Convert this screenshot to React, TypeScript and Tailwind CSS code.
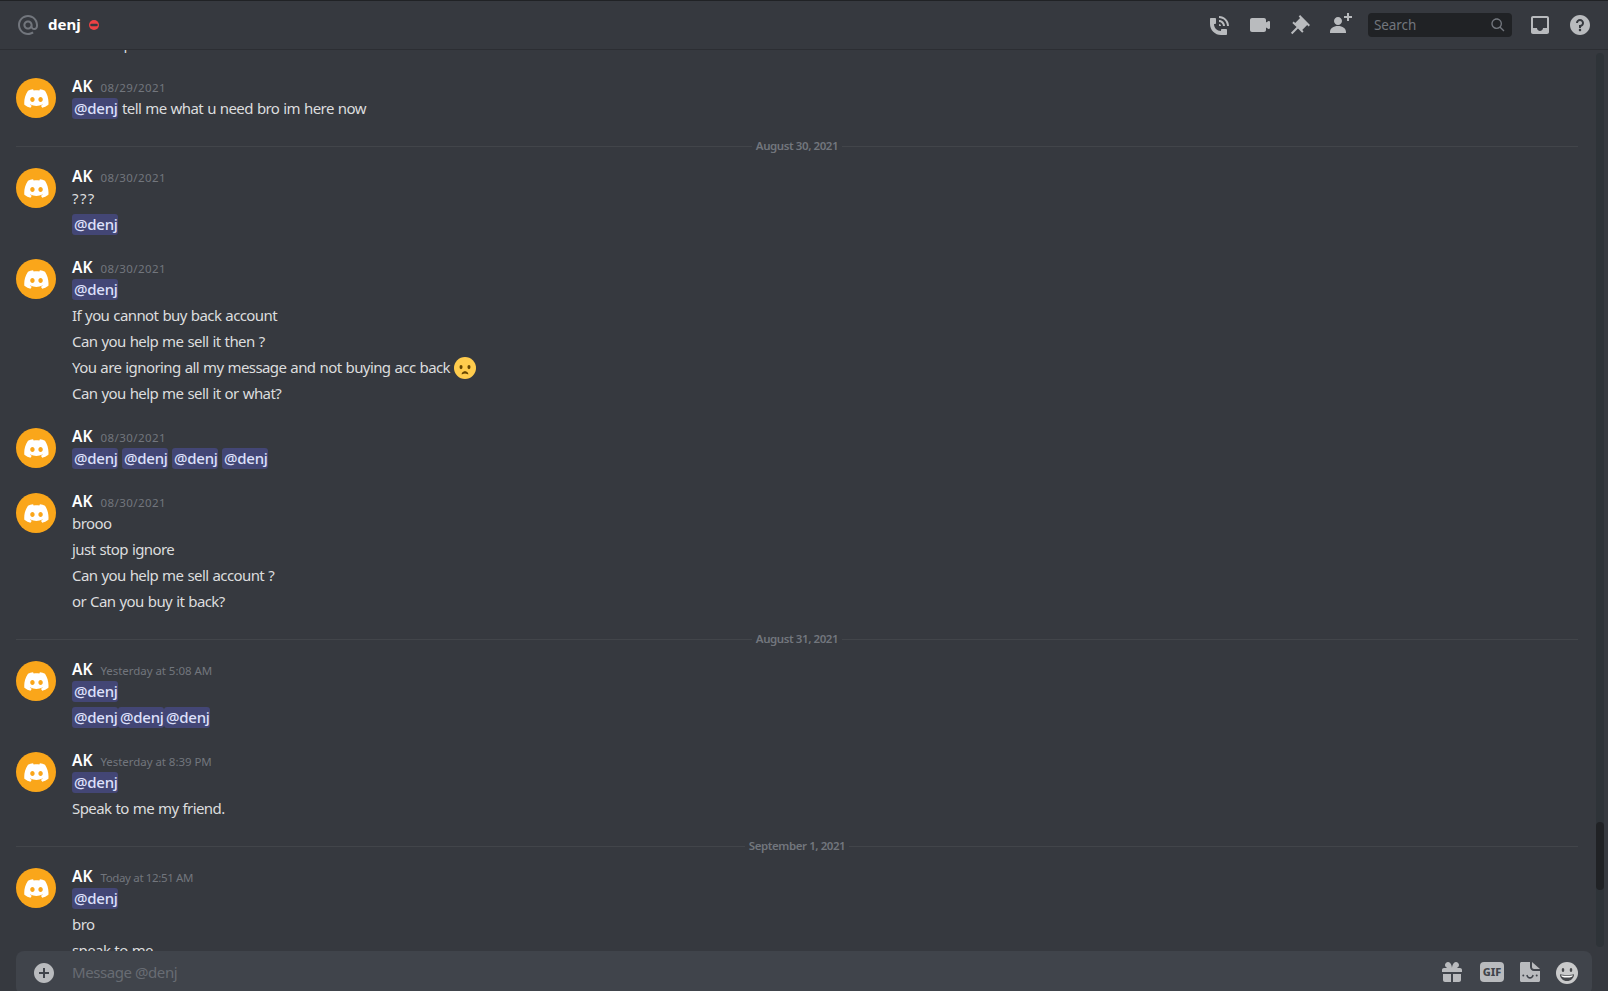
import type { ReactNode } from "react";

type MessageGroup = {
  time: string;
  lines: string[];
};

type Day = {
  label?: string;
  groups: MessageGroup[];
};

// "@denj" inside a line becomes a mention pill, ":frown:" becomes the emoji
const days: Day[] = [
  {
    groups: [{ time: "08/29/2021", lines: ["@denj tell me what u need bro im here now"] }],
  },
  {
    label: "August 30, 2021",
    groups: [
      { time: "08/30/2021", lines: ["???", "@denj"] },
      {
        time: "08/30/2021",
        lines: [
          "@denj",
          "If you cannot buy back account",
          "Can you help me sell it then ?",
          "You are ignoring all my message and not buying acc back :frown:",
          "Can you help me sell it or what?",
        ],
      },
      { time: "08/30/2021", lines: ["@denj @denj @denj @denj"] },
      {
        time: "08/30/2021",
        lines: ["brooo", "just stop ignore", "Can you help me sell account ?", "or Can you buy it back?"],
      },
    ],
  },
  {
    label: "August 31, 2021",
    groups: [
      { time: "Yesterday at 5:08 AM", lines: ["@denj", "@denj@denj@denj"] },
      { time: "Yesterday at 8:39 PM", lines: ["@denj", "Speak to me my friend."] },
    ],
  },
  {
    label: "September 1, 2021",
    groups: [{ time: "Today at 12:51 AM", lines: ["@denj", "bro", "speak to me"] }],
  },
];

function Icon({ size = 24, className, children }: { size?: number; className?: string; children: ReactNode }) {
  return (
    <svg width={size} height={size} viewBox="0 0 24 24" fill="currentColor" className={`shrink-0 ${className ?? ""}`}>
      {children}
    </svg>
  );
}

function Avatar() {
  return (
    <div className="mt-0.5 flex h-10 w-10 shrink-0 items-center justify-center rounded-full bg-[#faa61a]">
      <svg width="25" height="19" viewBox="0 0 71 55" fill="white">
        <path d="M60.1045 4.8978C55.5792 2.8214 50.7265 1.2916 45.6527 0.41542C45.5603 0.39851 45.468 0.440769 45.4204 0.525289C44.7963 1.6353 44.105 3.0834 43.6209 4.2216C38.1637 3.4046 32.7345 3.4046 27.3892 4.2216C26.905 3.0581 26.1886 1.6353 25.5617 0.525289C25.5141 0.443589 25.4218 0.40133 25.3294 0.41542C20.2584 1.2888 15.4057 2.8186 10.8776 4.8978C1.6 18.7 -0.9 32.1 0.3 45.4C6.4 49.9 12.3 52.6 18.1 54.4C19.5 52.6 20.7 50.6 21.8 48.5C19.9 47.8 18 46.9 16.3 45.8L17.4 44.9C28.9 50.2 41.4 50.2 52.8 44.9L53.9 45.8C52.2 46.8 50.3 47.7 48.4 48.4C49.4 50.5 50.7 52.5 52.1 54.4C57.9 52.6 63.8 49.9 70 45.4C71.4 30.1 67.6 16.7 60.1 4.9ZM23.7259 37.3253C20.2276 37.3253 17.3451 34.1136 17.3451 30.1693C17.3451 26.225 20.1717 23.0133 23.7259 23.0133C27.308 23.0133 30.1626 26.2532 30.1066 30.1693C30.1066 34.1136 27.28 37.3253 23.7259 37.3253ZM47.3178 37.3253C43.8196 37.3253 40.9371 34.1136 40.9371 30.1693C40.9371 26.225 43.7636 23.0133 47.3178 23.0133C50.9 23.0133 53.7545 26.2532 53.6986 30.1693C53.6986 34.1136 50.9 37.3253 47.3178 37.3253Z" />
      </svg>
    </div>
  );
}

function FrownEmoji() {
  return (
    <svg width="22" height="22" viewBox="0 0 36 36" className="inline-block align-top">
      <circle cx="18" cy="18" r="18" fill="#ffcc4d" />
      <ellipse cx="11.5" cy="16.5" rx="2.5" ry="3.5" fill="#664500" />
      <ellipse cx="24.5" cy="16.5" rx="2.5" ry="3.5" fill="#664500" />
      <path
        d="M23.485 27.879C23.474 27.835 22.34 23.5 18 23.5s-5.474 4.335-5.485 4.379a.5.5 0 0 0 .833.477C13.371 28.333 14.866 27 18 27s4.629 1.333 4.652 1.356a.5.5 0 0 0 .833-.477z"
        fill="#664500"
      />
    </svg>
  );
}

function MessageLine({ text }: { text: string }) {
  const parts = text.split(/(@denj|:frown:)/).filter(Boolean);
  const tracking = text === "???" ? "tracking-[1.4px]" : "tracking-[-0.59px]";

  return (
    <div className={`h-[22px] whitespace-pre text-[15px] leading-5 text-[#dcddde] [word-spacing:0.7px] ${tracking}`}>
      {parts.map((part, i) => {
        if (part === "@denj") {
          return (
            <span
              key={i}
              className="inline-block h-[21px] w-[46px] rounded-[3px] bg-[#434675] px-0.5 align-top font-medium leading-[21px] tracking-[-0.25px] text-[#dee0fc]"
            >
              @denj
            </span>
          );
        }
        if (part === ":frown:") return <FrownEmoji key={i} />;
        return <span key={i}>{part}</span>;
      })}
    </div>
  );
}

function timeTracking(time: string) {
  if (time.startsWith("Today")) return "tracking-[-0.35px]";
  if (time.startsWith("Yesterday")) return "tracking-[-0.05px]";
  return "tracking-[0.45px]";
}

function Group({ time, lines }: MessageGroup) {
  const [first, ...rest] = lines;

  return (
    <div className="mt-[17px]">
      <div className="flex gap-4 py-0.5 pl-4">
        <Avatar />
        <div>
          <div className="flex h-[22px] items-baseline gap-2 pt-0.5 leading-4">
            <span className="text-[15.5px] font-semibold text-white">AK</span>
            <span className={`text-[11.5px] text-[#72767d] ${timeTracking(time)}`}>{time}</span>
          </div>
          <MessageLine text={first} />
        </div>
      </div>
      {rest.map((line, i) => (
        <div key={i} className="py-0.5 pl-[72px]">
          <MessageLine text={line} />
        </div>
      ))}
    </div>
  );
}

function DayDivider({ label }: { label: string }) {
  return (
    <div className="mt-6 ml-4 mr-[14px] flex h-px items-center">
      <div className="h-px flex-1 bg-[#42454a]" />
      <span className="px-1 pb-0.5 text-[11.5px] font-semibold leading-[13px] tracking-[-0.42px] text-[#72767d]">{label}</span>
      <div className="h-px flex-1 bg-[#42454a]" />
    </div>
  );
}

function Header() {
  return (
    <header className="flex h-[50px] shrink-0 items-center border-t border-b border-t-[#202225] border-b-[#2c2e33] px-4 text-[#b9bbbe]">
      <Icon className="text-[#72767d]">
        <path d="M12 2C6.486 2 2 6.486 2 12C2 17.515 6.486 22 12 22C14.039 22 15.993 21.398 17.652 20.259L16.521 18.611C15.195 19.519 13.633 20 12 20C7.589 20 4 16.411 4 12C4 7.589 7.589 4 12 4C16.411 4 20 7.589 20 12V12.782C20 14.17 19.402 15 18.4 15L18.398 15.018C18.338 15.005 18.273 15 18.209 15H18C17.437 15 16.6 14.182 16.6 13.631V12C16.6 9.464 14.537 7.4 12 7.4C9.463 7.4 7.4 9.463 7.4 12C7.4 14.537 9.463 16.6 12 16.6C13.234 16.6 14.35 16.106 15.177 15.313C15.826 16.269 16.93 17 18 17L18.002 16.981C18.064 16.994 18.129 17 18.195 17H18.4C20.552 17 22 15.306 22 12.782V12C22 6.486 17.514 2 12 2ZM12 14.599C10.566 14.599 9.4 13.433 9.4 11.999C9.4 10.565 10.566 9.399 12 9.399C13.434 9.399 14.6 10.565 14.6 11.999C14.6 13.433 13.434 14.599 12 14.599Z" />
      </Icon>
      <span className="ml-2 pb-0.5 text-[15px] font-bold leading-5 text-white">denj</span>
      <svg width="10" height="10" viewBox="0 0 10 10" className="ml-2">
        <circle cx="5" cy="5" r="5" fill="#ed4245" />
        <rect x="1.25" y="3.75" width="7.5" height="2.5" rx="1.25" fill="#36393f" />
      </svg>
      <div className="ml-auto flex items-center gap-4">
        <Icon>
          <path d="M11 5V3C16.515 3 21 7.486 21 13H19C19 8.589 15.411 5 11 5ZM17 13C17 9.691 14.309 7 11 7V9C13.206 9 15 10.795 15 13H17ZM11 11V13H13C13 11.896 12.105 11 11 11ZM14 16H18C18.553 16 19 16.447 19 17V21C19 21.553 18.553 22 18 22H13C6.925 22 2 17.075 2 11V6C2 5.447 2.448 5 3 5H7C7.553 5 8 5.447 8 6V10C8 10.553 7.553 11 7 11H6C6.063 14.938 9 18 13 18V17C13 16.447 13.447 16 14 16Z" />
        </Icon>
        <Icon>
          <path d="M21.526 8.149C21.231 7.966 20.862 7.951 20.553 8.105L18 9.382V7C18 5.897 17.103 5 16 5H4C2.897 5 2 5.897 2 7V17C2 18.104 2.897 19 4 19H16C17.103 19 18 18.104 18 17V14.618L20.553 15.894C20.694 15.965 20.847 16 21 16C21.183 16 21.365 15.949 21.526 15.851C21.82 15.668 22 15.347 22 15V9C22 8.653 21.82 8.332 21.526 8.149Z" />
        </Icon>
        <Icon>
          <path d="M22 12L12.101 2.10101L10.686 3.51401L12.101 4.92901L7.15096 9.87801V9.88001L5.73596 8.46501L4.32196 9.88001L8.56496 14.122L2.90796 19.778L4.32196 21.192L9.97896 15.536L14.222 19.778L15.636 18.364L14.222 16.95L19.171 12H19.172L20.586 13.414L22 12Z" />
        </Icon>
        <Icon>
          <path d="M21 3H24V5H21V8H19V5H16V3H19V0H21V3ZM10 12C12.205 12 14 10.205 14 8C14 5.795 12.205 4 10 4C7.795 4 6 5.795 6 8C6 10.205 7.795 12 10 12ZM10 13C5.289 13 2 15.467 2 19V20H18V19C18 15.467 14.711 13 10 13Z" />
        </Icon>
        <div className="flex h-6 w-[144px] items-center justify-between rounded bg-[#202225] px-1.5 text-[#72767d]">
          <span className="text-[13.5px] leading-5 tracking-[-0.1px]">Search</span>
          <Icon size={16}>
            <path d="M21.707 20.293L16.314 14.9C17.403 13.504 18 11.799 18 10C18 7.863 17.167 5.854 15.656 4.344C14.146 2.832 12.137 2 10 2C7.863 2 5.854 2.832 4.344 4.344C2.833 5.854 2 7.863 2 10C2 12.137 2.833 14.146 4.344 15.656C5.854 17.168 7.863 18 10 18C11.799 18 13.504 17.404 14.9 16.314L20.293 21.706L21.707 20.293ZM10 16C8.397 16 6.891 15.376 5.758 14.243C4.624 13.11 4 11.603 4 10C4 8.398 4.624 6.891 5.758 5.758C6.891 4.624 8.397 4 10 4C11.603 4 13.109 4.624 14.242 5.758C15.376 6.891 16 8.398 16 10C16 11.603 15.376 13.11 14.242 14.243C13.109 15.376 11.603 16 10 16Z" />
          </Icon>
        </div>
        <Icon>
          <path d="M19 3H4.99C3.88 3 3.01 3.89 3.01 5L3 19C3 20.1 3.88 21 4.99 21H19C20.1 21 21 20.1 21 19V5C21 3.89 20.1 3 19 3ZM19 15H15C15 16.66 13.65 18 12 18C10.35 18 9 16.66 9 15H4.99V5H19V15Z" />
        </Icon>
        <Icon>
          <path d="M12 2C6.486 2 2 6.487 2 12C2 17.515 6.486 22 12 22C17.514 22 22 17.515 22 12C22 6.487 17.514 2 12 2ZM12 18.25C11.31 18.25 10.75 17.691 10.75 17C10.75 16.31 11.31 15.75 12 15.75C12.69 15.75 13.25 16.31 13.25 17C13.25 17.691 12.69 18.25 12 18.25ZM13 13.875V15H11V12H12C13.104 12 14 11.103 14 10C14 8.896 13.104 8 12 8C10.896 8 10 8.896 10 10H8C8 7.795 9.795 6 12 6C14.205 6 16 7.795 16 10C16 11.861 14.723 13.429 13 13.875Z" />
        </Icon>
      </div>
    </header>
  );
}

function Composer() {
  return (
    <div className="mx-4 flex h-11 shrink-0 items-center rounded-lg bg-[#40444b] pl-4 text-[#b9bbbe]">
      <Icon>
        <path d="M12 2.00098C6.486 2.00098 2 6.48698 2 12.001C2 17.515 6.486 22.001 12 22.001C17.514 22.001 22 17.515 22 12.001C22 6.48698 17.514 2.00098 12 2.00098ZM17 13.001H13V17.001H11V13.001H7V11.001H11V7.00098H13V11.001H17V13.001Z" />
      </Icon>
      <span className="ml-4 pb-0.5 text-[15px] leading-[22px] tracking-[-0.43px] text-[#686c73]">Message @denj</span>
      <div className="ml-auto flex items-center pb-0.5 pr-[14px]">
        <Icon>
          <path d="M16.886 7.999H20C21.104 7.999 22 8.896 22 9.999V11.999H2V9.999C2 8.896 2.897 7.999 4 7.999H7.114C6.663 7.764 6.236 7.477 5.879 7.121C4.709 5.951 4.709 4.048 5.879 2.879C7.012 1.746 8.986 1.746 10.121 2.877C11.758 4.514 11.979 7.595 11.998 7.941C11.998 7.962 11.999 7.98 12 7.999C12 7.98 12.001 7.962 12.002 7.941C12.021 7.595 12.242 4.514 13.879 2.877C15.014 1.745 16.986 1.746 18.121 2.877C19.29 4.048 19.29 5.951 18.121 7.121C17.764 7.477 17.337 7.764 16.886 7.999ZM7.293 5.707C6.903 5.316 6.903 4.682 7.293 4.292C7.481 4.103 7.732 4 8 4C8.268 4 8.519 4.103 8.707 4.292C9.297 4.882 9.641 5.94 9.825 6.822C8.945 6.639 7.879 6.293 7.293 5.707ZM14.174 6.824C14.359 5.941 14.702 4.883 15.293 4.293C15.481 4.103 15.732 4 16 4C16.268 4 16.519 4.103 16.706 4.291C17.096 4.682 17.097 5.316 16.707 5.707C16.116 6.298 15.057 6.642 14.174 6.824ZM3 13.999V19.999C3 21.102 3.897 21.999 5 21.999H11V13.999H3ZM13 13.999V21.999H19C20.104 21.999 21 21.102 21 19.999V13.999H13Z" />
        </Icon>
        <div className="ml-4 flex h-5 w-6 items-center justify-center rounded-sm bg-[#b9bbbe] text-[11px] font-extrabold leading-5 text-[#40444b]">
          GIF
        </div>
        <Icon className="ml-[14px]">
          <path d="M14 2V7C14 8.1 14.9 9 16 9H22L14 2Z" />
          <path
            fillRule="evenodd"
            d="M12 2H3.5C2.7 2 2 2.7 2 3.5V20.5C2 21.3 2.7 22 3.5 22H20.5C21.3 22 22 21.3 22 20.5V11H16C13.8 11 12 9.2 12 7V2ZM5.3 16.5A1 1 0 1 0 5.3 14.5A1 1 0 0 0 5.3 16.5ZM18.7 16.5A1 1 0 1 0 18.7 14.5A1 1 0 0 0 18.7 16.5ZM8.2 15.3C8.7 17.4 10.2 18.7 12 18.7C13.8 18.7 15.3 17.4 15.8 15.3L14.4 14.8C14 16.3 13.2 17.1 12 17.1C10.8 17.1 10 16.3 9.6 14.8Z"
          />
        </Icon>
        <svg width="22" height="22" viewBox="0 0 22 22" className="mt-0.5 ml-[14px]">
          <circle cx="11" cy="11" r="11" fill="#c9cacb" />
          <ellipse cx="7" cy="8" rx="1.3" ry="2" fill="#45474b" />
          <ellipse cx="15" cy="8" rx="1.3" ry="2" fill="#45474b" />
          <path d="M4 12.2C6 13.2 16 13.2 18 12.2C18 16 15 19 11 19C7 19 4 16 4 12.2Z" fill="#45474b" />
          <path d="M5.2 13.2C8 14 14 14 16.8 13.2C16.5 15 15 15.6 11 15.6C7 15.6 5.5 15 5.2 13.2Z" fill="white" />
        </svg>
      </div>
    </div>
  );
}

export default function App() {
  return (
    <div className="flex h-screen flex-col overflow-hidden bg-[#36393f] font-['Noto_Sans',sans-serif]">
      <Header />
      <div className="flex h-[901px] shrink-0">
        <main className="flex min-w-0 flex-1 flex-col overflow-hidden">
          {/* tail of the message scrolled under the header */}
          <div className="-mt-[18px] mb-[3px] h-[22px] shrink-0 pl-[102px] text-[15px] leading-[22px] text-[#dcddde]">help</div>
          {days.map((day, i) => (
            <section key={i} className="shrink-0">
              {day.label && <DayDivider label={day.label} />}
              {day.groups.map((group, j) => (
                <Group key={j} {...group} />
              ))}
            </section>
          ))}
        </main>
        <div className="mx-1 mt-[3px] mb-1 flex w-2 flex-col justify-end rounded bg-[#2e3338] pb-[57px]">
          <div className="h-[68px] rounded bg-[#202225]" />
        </div>
      </div>
      <Composer />
    </div>
  );
}
